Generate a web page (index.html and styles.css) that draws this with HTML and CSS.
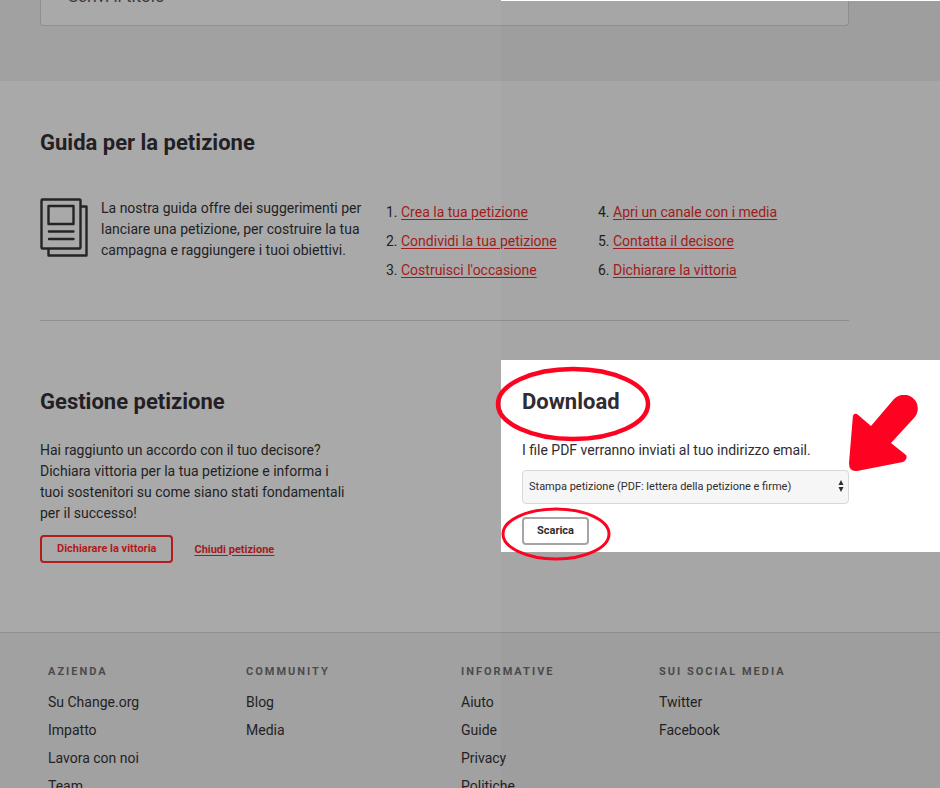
FILE: index.html
```html
<!DOCTYPE html>
<html lang="it">
<head>
<meta charset="utf-8">
<meta name="viewport" content="width=device-width, initial-scale=1">
<title>Gestione petizione</title>
<link rel="stylesheet" href="styles.css">
</head>
<body>
<div class="page">
  <section class="updates">
    <div class="card"><p>Scrivi il titolo</p></div>
  </section>

  <main class="main">
    <section class="guide">
      <h2>Guida per la petizione</h2>
      <div class="guide-row">
        <div class="intro">
          <svg class="doc" viewBox="0 0 50 60" width="50" height="60" fill="none" stroke="#242424" stroke-width="2.400" stroke-linecap="round" stroke-linejoin="round" aria-hidden="true">
            <rect x="1.500" y="1.500" width="39" height="49" rx="1"/>
            <rect x="8.500" y="8" width="25" height="18"/>
            <path d="M9 33.500H33.500M9 41H33.500M41 8.500h5.500v49H8.500v-6"/>
          </svg>
          <p>La nostra guida offre dei suggerimenti per lanciare una petizione, per costruire la tua campagna e raggiungere i tuoi obiettivi.</p>
        </div>
        <ol class="steps">
          <li><a href="#">Crea la tua petizione</a></li>
          <li><a href="#">Condividi la tua petizione</a></li>
          <li><a href="#">Costruisci l'occasione</a></li>
        </ol>
        <ol class="steps" start="4">
          <li><a href="#">Apri un canale con i media</a></li>
          <li><a href="#">Contatta il decisore</a></li>
          <li><a href="#">Dichiarare la vittoria</a></li>
        </ol>
      </div>
    </section>

    <div class="panels">
      <section class="manage">
        <h2>Gestione petizione</h2>
        <p>Hai raggiunto un accordo con il tuo decisore? Dichiara vittoria per la tua petizione e informa i tuoi sostenitori su come siano stati fondamentali per il successo!</p>
        <div class="actions">
          <button class="btn btn-red" type="button">Dichiarare la vittoria</button>
          <a class="close" href="#">Chiudi petizione</a>
        </div>
      </section>
      <section class="download">
        <h2><span class="mark">Download<svg class="ring ring-title" viewBox="0 0 156 76" aria-hidden="true"><ellipse cx="78" cy="38" rx="75" ry="35" stroke-width="4.500"/></svg></span></h2>
        <label for="format">I file PDF verranno inviati al tuo indirizzo email.</label>
        <div class="field">
          <select id="format"><option>Stampa petizione (PDF: lettera della petizione e firme)</option></select>
          <svg class="carets" viewBox="0 0 6 12" aria-hidden="true"><path d="M3 0L5.500 5H.5zM3 12L.5 7h5z"/></svg>
          <svg class="arrow" viewBox="0 0 72 78" aria-hidden="true">
            <path d="M5 20L1 68Q1 77 9 76L55 67Q60 64 58 60L43 48L66 23A13 13 0 0 0 46 4L23 31L9 19Q5 18 5 22Z"/>
          </svg>
        </div>
        <span class="mark"><button class="btn btn-gray" type="button">Scarica</button><svg class="ring ring-button" viewBox="0 0 110 54" aria-hidden="true"><ellipse cx="55" cy="27" rx="53" ry="25" stroke-width="3"/></svg></span>
      </section>
    </div>
  </main>

  <footer class="footer">
    <nav aria-labelledby="f1"><h3 id="f1">Azienda</h3><a href="#">Su Change.org</a><a href="#">Impatto</a><a href="#">Lavora con noi</a><a href="#">Team</a></nav>
    <nav aria-labelledby="f2"><h3 id="f2">Community</h3><a href="#">Blog</a><a href="#">Media</a></nav>
    <nav aria-labelledby="f3"><h3 id="f3">Informative</h3><a href="#">Aiuto</a><a href="#">Guide</a><a href="#">Privacy</a><a href="#">Politiche</a></nav>
    <nav aria-labelledby="f4"><h3 id="f4">Sui social media</h3><a href="#">Twitter</a><a href="#">Facebook</a></nav>
  </footer>
  <div class="shade"></div>
</div>
</body>
</html>
```
FILE: styles.css
```css
* { box-sizing: border-box; }

body {
  margin: 0;
  background: #a1a1a1;
  color: #231f24;
  font: 14px/21px Roboto, "Liberation Sans", sans-serif;
}

.page {
  position: relative;
  height: 100vh;
  overflow: hidden;
}

h2, h3, p, ol { margin: 0; padding: 0; }

h2 {
  font-size: 22px;
  line-height: 30px;
  font-weight: 700;
}

/* Dimming over the right-hand part of the page */
.shade {
  position: absolute;
  top: 0;
  right: 0;
  bottom: 0;
  left: 501px;
  border-top: 1px solid #fff;
  background: rgba(0, 0, 0, .016);
  pointer-events: none;
}

.updates { padding: 0 91px 55px 40px; }

.card {
  height: 26px;
  padding: 0 27px;
  display: flex;
  align-items: flex-end;
  border: 1px solid #909090;
  border-top: 0;
  border-radius: 0 0 4px 4px;
  background: #a9a9a9;
}

.card p {
  padding-bottom: 18px;
  font-size: 17px;
  line-height: 22px;
  color: #3c3c3c;
}

.main {
  padding: 47px 0 69px 40px;
  background: #a9a9a9;
}

.guide {
  margin-right: 91px;
  padding-bottom: 39px;
  border-bottom: 1px solid #909090;
}

.guide-row {
  display: grid;
  grid-template-columns: 361fr 212fr 236fr;
  margin-top: 40px;
}

.intro {
  display: flex;
  gap: 11px;
  padding-right: 36px;
}

.doc { flex: none; }

.steps {
  padding-top: 4px;
  list-style-position: outside;
}

.steps li { padding-bottom: 8px; }
.steps li:last-child { padding-bottom: 0; }

a { color: inherit; }

.steps a, .close {
  color: #a31c1c;
  text-underline-offset: 2px;
}

.panels {
  display: grid;
  grid-template-columns: 461fr 439fr;
  margin-top: 39px;
  align-items: start;
}

.manage { padding: 27px 150px 0 0; }
.manage p { margin-top: 23px; }

.actions {
  display: flex;
  align-items: center;
  gap: 21px;
  margin-top: 11px;
}

.btn {
  border-radius: 4px;
  font: 700 11px/18px Roboto, "Liberation Sans", sans-serif;
}

.btn-red {
  height: 28px;
  padding: 0 15px;
  border: 2px solid #b21c1c;
  background: transparent;
  color: #b21c1c;
}

.close {
  font-size: 11px;
  font-weight: 700;
}

.download {
  position: relative;
  z-index: 1;
  padding: 27px 91px 7px 21px;
  background: #fff;
  color: #302c31;
}

.download label {
  display: block;
  margin-top: 23px;
}

.mark {
  position: relative;
  display: inline-block;
}

.field {
  position: relative;
  margin: 9px 0 13px;
}

select {
  display: block;
  width: 100%;
  height: 34px;
  padding: 0 6px;
  appearance: none;
  border: 1px solid #d8d8d8;
  border-radius: 4px;
  background: #f6f6f6;
  color: #302c31;
  font: 11px/18px Roboto, "Liberation Sans", sans-serif;
}

.carets {
  position: absolute;
  top: 10px;
  right: 5px;
  width: 6px;
  height: 12px;
  fill: #302c31;
}

.btn-gray {
  display: block;
  height: 28px;
  padding: 0 13px;
  border: 2px solid #a5a5a5;
  background: #fff;
  color: #302c31;
}

.ring {
  position: absolute;
  fill: none;
  stroke: #fd0321;
  pointer-events: none;
}

.ring-title {
  top: -21px;
  left: -27px;
  width: 156px;
  height: 76px;
}

.ring-button {
  top: -10px;
  left: -21px;
  width: 110px;
  height: 54px;
}

.arrow {
  position: absolute;
  right: -71px;
  bottom: 31px;
  width: 72px;
  height: 78px;
  fill: #fd0321;
  pointer-events: none;
}

.footer {
  display: grid;
  grid-template-columns: 198fr 215fr 198fr 190fr;
  padding: 29px 91px 0 48px;
  border-top: 1px solid #909090;
}

.footer h3 {
  margin-bottom: 6px;
  font-size: 11px;
  line-height: 20px;
  letter-spacing: 2px;
  text-transform: uppercase;
  color: #4c4b4c;
}

.footer a {
  display: block;
  line-height: 28px;
  text-decoration: none;
}
```
